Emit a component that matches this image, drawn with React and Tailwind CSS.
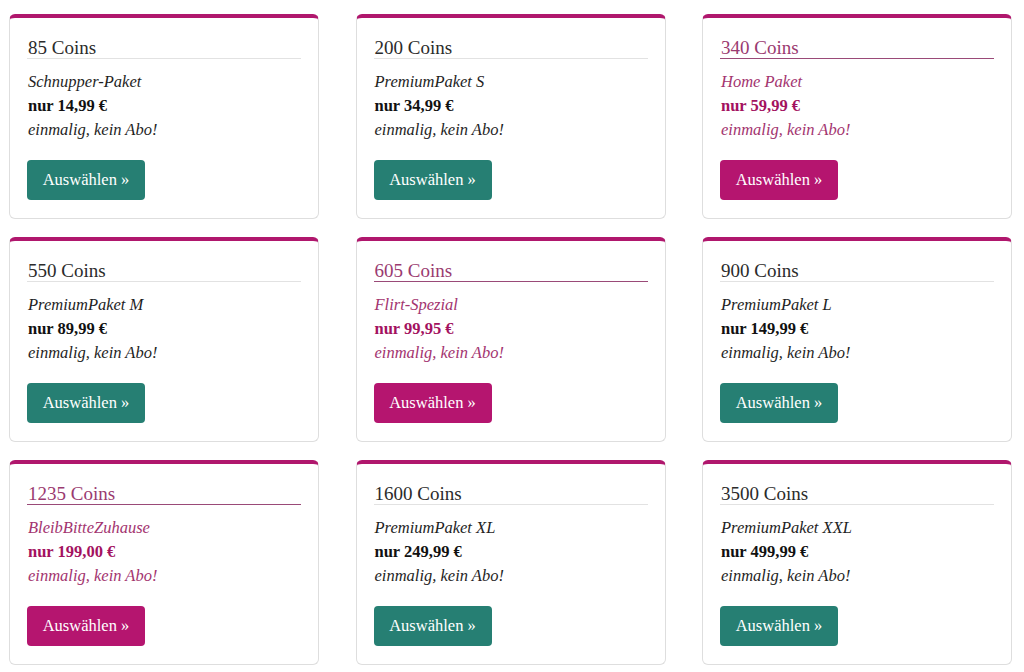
const packages = [
  { coins: 85, name: 'Schnupper-Paket', price: '14,99' },
  { coins: 200, name: 'PremiumPaket S', price: '34,99' },
  { coins: 340, name: 'Home Paket', price: '59,99', hot: true },
  { coins: 550, name: 'PremiumPaket M', price: '89,99' },
  { coins: 605, name: 'Flirt-Spezial', price: '99,95', hot: true },
  { coins: 900, name: 'PremiumPaket L', price: '149,99' },
  { coins: 1235, name: 'BleibBitteZuhause', price: '199,00', hot: true },
  { coins: 1600, name: 'PremiumPaket XL', price: '249,99' },
  { coins: 3500, name: 'PremiumPaket XXL', price: '499,99' },
];

function PackageCard({ p }) {
  return (
    <div className="h-[205px] rounded-md border border-[#dedede] border-t-4 border-t-[#b0176d] bg-white px-[17px] pt-[20px]">
      <h3
        className={
          p.hot
            ? 'pl-px text-[19px] leading-[20px] text-[#9a3a70] border-b border-[#9a4a78]'
            : 'pl-px text-[19px] leading-[20px] text-[#2b2b2b] border-b border-[#e2e2e2]'
        }
      >
        {p.coins} Coins
      </h3>
      <div className={p.hot ? 'mt-[11px] pl-px text-[16.5px] leading-[24px] text-[#a3346f]' : 'mt-[11px] pl-px text-[16.5px] leading-[24px] text-[#1f1f1f]'}>
        <p className="italic">{p.name}</p>
        <p className={p.hot ? 'font-bold text-[#a3125f]' : 'font-bold text-[#111]'}>nur {p.price} €</p>
        <p className="italic">einmalig, kein Abo!</p>
      </div>
      <button
        className={
          p.hot
            ? 'mt-[18px] h-[40px] w-[118px] rounded-[4px] bg-[#b5156f] text-[16.5px] text-white'
            : 'mt-[18px] h-[40px] w-[118px] rounded-[4px] bg-[#267f73] text-[16.5px] text-white'
        }
      >
        Auswählen »
      </button>
    </div>
  );
}

export default function App() {
  return (
    <div className="min-h-[672px] bg-white font-['Liberation_Serif',serif]">
      <div className="grid grid-cols-[310px_310px_310px] gap-x-[36.5px] gap-y-[18px] pl-[9px] pt-[14px]">
        {packages.map((p) => (
          <PackageCard key={p.coins} p={p} />
        ))}
      </div>
    </div>
  );
}
